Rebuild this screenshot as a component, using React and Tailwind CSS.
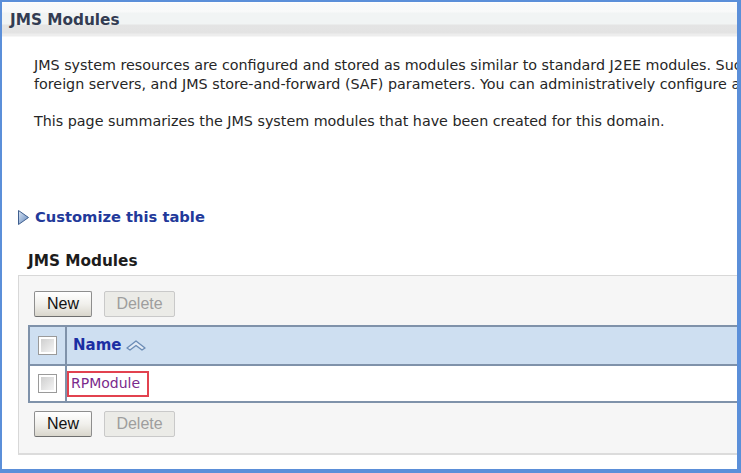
import React from 'react';

const Checkbox = () => (
  <div className="w-[19px] h-[19px] border border-[#9a9a9a] bg-white p-[2px]">
    <div className="w-full h-full bg-[linear-gradient(135deg,#cfcfcf,#f4f4f4)]"></div>
  </div>
);

const Buttons = () => (
  <div className="flex gap-[12px] ml-[6px] font-['Liberation_Sans',Arial,sans-serif] text-[16px]">
    <button className="w-[58px] h-[26px] rounded-[2px] border border-[#8e8e8e] border-b-[#6f6f6f] bg-[linear-gradient(to_bottom,#ffffff,#f1f0ec_50%,#d9d6cc)] text-[#111] leading-none">
      New
    </button>
    <button className="w-[71px] h-[26px] rounded-[2px] border border-[#c9c9c9] bg-[#ebebe7] text-[#9e9e9e] leading-none">
      Delete
    </button>
  </div>
);

const SortIcon = () => (
  <svg width="20" height="11" viewBox="0 0 20 11" className="ml-[5px]">
    <path d="M1 8 L10 1 L19 8 L16 10 L10 5.5 L4 10 Z" fill="#e3ebf5" stroke="#6d8db6" strokeWidth="1.4" strokeLinejoin="round" />
  </svg>
);

export default function App() {
  return (
    <div className="w-[741px] h-[473px] bg-white border-[#5b8fd9] border-t-2 border-l-2 border-r-4 border-b-4 overflow-hidden font-['Tahoma','DejaVu_Sans',sans-serif]">
      {/* header bar */}
      <div className="h-[35px] flex items-center pl-[8px] bg-[linear-gradient(to_bottom,#ffffff_0px,#f9fafa_2px,#f8f9f9_10px,#f1f4f4_11px,#f1f4f4_22px,#e4e4e4_23px,#e3e3e3_31px,#ededed_32px,#ededed_34px,#ffffff_35px)]">
        <span className="text-[15.3px] font-bold text-[#333c52] mt-[1px]">JMS Modules</span>
      </div>

      {/* description */}
      <div className="pl-[32px] pt-[19px] text-[14.3px] leading-[19px] text-[#262626] whitespace-nowrap">
        <p>JMS system resources are configured and stored as modules similar to standard J2EE modules. Such resources include queues, topics, connection factories, templates, destination keys, quota, distributed queues, distributed topics,</p>
        <p>foreign servers, and JMS store-and-forward (SAF) parameters. You can administratively configure and manage JMS system modules as global resources.</p>
        <p className="mt-[18px]">This page summarizes the JMS system modules that have been created for this domain.</p>
      </div>

      {/* customize link */}
      <div className="mt-[76px] pl-[15px] h-[20px] flex items-center gap-[5px]">
        <svg width="13" height="17" viewBox="0 0 13 17">
          <defs>
            <linearGradient id="tri" x1="0" x2="1" y1="0" y2="1">
              <stop offset="0%" stopColor="#dbe6f4" />
              <stop offset="100%" stopColor="#5f86bd" />
            </linearGradient>
          </defs>
          <path d="M1.5 1.5 L11.5 8.5 L1.5 15.5 Z" fill="url(#tri)" stroke="#3f5f8f" strokeWidth="1" strokeLinejoin="round" />
        </svg>
        <span className="text-[14.7px] font-bold text-[#22399a]">Customize this table</span>
      </div>

      {/* table section title */}
      <div className="mt-[24px] pl-[26px] h-[20px] flex items-center">
        <span className="text-[15.3px] font-bold text-[#1c1c1c]">JMS Modules</span>
      </div>

      {/* table box */}
      <div className="mt-[4px] ml-[16px] bg-[#f6f6f6] border-t border-l border-[#d8d8d8] border-b-2 border-b-[#dcdcdc] pt-[15px] pb-[16px] pl-[9px]">
        <Buttons />
        <div className="mt-[8px] border-t-2 border-l-2 border-b-2 border-[#7f92aa]">
          <div className="flex h-[37px] bg-[#cedff1]">
            <div className="w-[37px] flex items-center justify-center border-r-2 border-[#7f92aa]">
              <Checkbox />
            </div>
            <div className="flex-1 flex items-center pl-[6px]">
              <span className="text-[15px] font-bold text-[#1b2ea3]">Name</span>
              <SortIcon />
            </div>
          </div>
          <div className="flex h-[37px] bg-white border-t-2 border-[#7f92aa]">
            <div className="w-[37px] flex items-center justify-center border-r-2 border-[#7f92aa]">
              <Checkbox />
            </div>
            <div className="flex-1 flex items-center">
              <span className="h-[26px] flex items-center border-2 border-[#e2424f] pl-[2px] pr-[7px] text-[14px] text-[#7a2a8c]">RPModule</span>
            </div>
          </div>
        </div>
        <div className="mt-[8px]">
          <Buttons />
        </div>
      </div>
    </div>
  );
}
